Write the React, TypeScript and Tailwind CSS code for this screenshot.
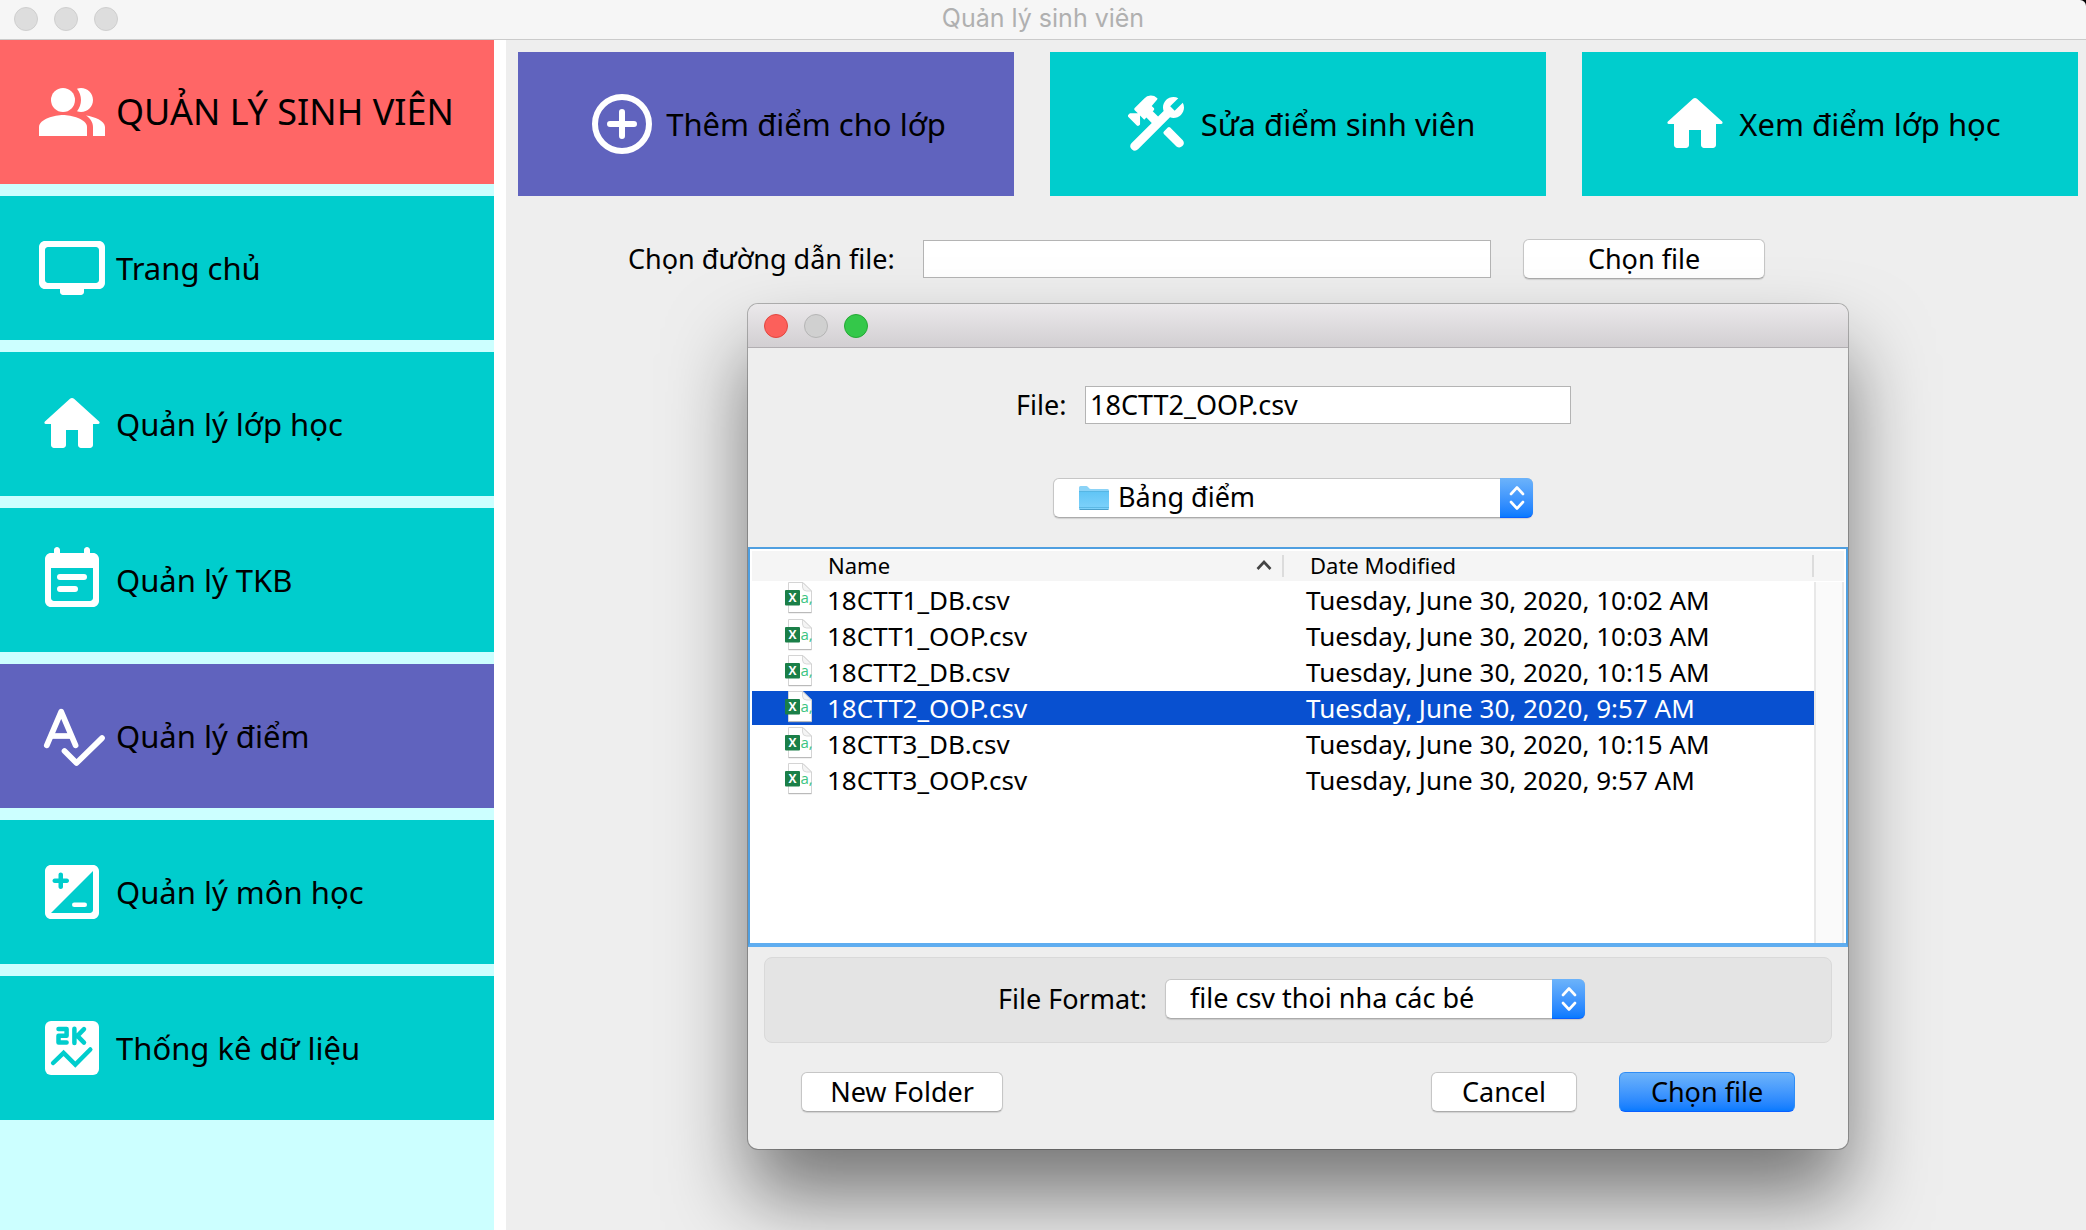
import { useState } from "react";
import type { ReactNode } from "react";

function Glyph({ children }: { children: ReactNode }) {
  return (
    <svg viewBox="0 0 24 24" className="size-18 shrink-0 fill-white" aria-hidden="true">
      {children}
    </svg>
  );
}

function PeopleIcon() {
  return (
    <Glyph>
      <path d="M16.67 13.13C18.04 14.06 19 15.32 19 17v3h4v-3c0-2.18-3.57-3.47-6.33-3.87z" />
      <circle cx="9" cy="8" r="4" />
      <path d="M15 12c2.21 0 4-1.79 4-4s-1.79-4-4-4c-.47 0-.91.1-1.33.24C14.5 5.27 15 6.58 15 8s-.5 2.73-1.33 3.76c.42.14.86.24 1.33.24z" />
      <path d="M9 13c-2.67 0-8 1.34-8 4v3h16v-3c0-2.66-5.33-4-8-4z" />
    </Glyph>
  );
}

function ScreenIcon() {
  return (
    <Glyph>
      <path d="M21 3H3c-1.1 0-2 .9-2 2v12c0 1.1.9 2 2 2h5v1c0 .55.45 1 1 1h6c.55 0 1-.45 1-1v-1h5c1.1 0 1.99-.9 1.99-2L23 5c0-1.1-.9-2-2-2zm-1 14H4c-.55 0-1-.45-1-1V6c0-.55.45-1 1-1h16c.55 0 1 .45 1 1v10c0 .55-.45 1-1 1z" />
    </Glyph>
  );
}

function HomeIcon() {
  return (
    <Glyph>
      <path d="M10 19v-5h4v5c0 .55.45 1 1 1h3c.55 0 1-.45 1-1v-7h1.7c.46 0 .68-.57.33-.87L12.67 3.6c-.38-.34-.96-.34-1.34 0l-8.36 7.53c-.34.3-.13.87.33.87H5v7c0 .55.45 1 1 1h3c.55 0 1-.45 1-1z" />
    </Glyph>
  );
}

function CalendarIcon() {
  return (
    <Glyph>
      <path d="M19 3h-1V2c0-.55-.45-1-1-1s-1 .45-1 1v1H8V2c0-.55-.45-1-1-1s-1 .45-1 1v1H5c-1.1 0-2 .9-2 2v14c0 1.1.9 2 2 2h14c1.1 0 2-.9 2-2V5c0-1.1-.9-2-2-2zm-1 16H6c-.55 0-1-.45-1-1V8h14v10c0 .55-.45 1-1 1z" />
      <rect x="7" y="10" width="10" height="2" rx="1" />
      <rect x="7" y="14" width="7" height="2" rx="1" />
    </Glyph>
  );
}

function GradeIcon() {
  return (
    <Glyph>
      <g fill="none" stroke="white" strokeLinecap="round" strokeLinejoin="round" strokeWidth="1.9">
        <path d="M3.6 15.1 8.4 3.9 13.2 15.1" />
        <path d="M5 12h7" strokeLinecap="butt" />
        <path d="M9.5 17 13.5 21 22 12.7" />
      </g>
    </Glyph>
  );
}

function ExposureIcon() {
  return (
    <Glyph>
      <path
        fillRule="evenodd"
        d="M5 3h14c1.1 0 2 .9 2 2v14c0 1.1-.9 2-2 2H5c-1.1 0-2-.9-2-2V5c0-1.1.9-2 2-2zM19 5 5 19h13c.55 0 1-.45 1-1zM7.5 6.25v1.25H6.25c-1 0-1 1.5 0 1.5H7.5v1.25c0 1 1.5 1 1.5 0V9h1.25c1 0 1-1.5 0-1.5H9V6.25c0-1-1.5-1-1.5 0z"
      />
      <rect x="12" y="15.5" width="5" height="1.5" rx=".75" />
    </Glyph>
  );
}

function StatsIcon() {
  return (
    <Glyph>
      <rect x="3" y="3" width="18" height="18" rx="2" />
      <g fill="none" stroke="#00cdcd" strokeLinecap="round" strokeLinejoin="round" strokeWidth="1.5">
        <path d="M7.5 5.7H10.2V7.9H7.5V10.2H10.2" />
        <path d="M12.8 5.6V10.3M16 5.7 13.8 7.95 16 10.2" />
        <path d="M5.7 17 9.2 13.6 13.1 17.5 18.1 12.5" strokeLinejoin="miter" />
      </g>
    </Glyph>
  );
}

function AddIcon() {
  return (
    <Glyph>
      <g fill="none" stroke="white" strokeLinecap="round" strokeWidth="2">
        <circle cx="12" cy="12" r="9" />
        <path d="M12 8v8M8 12h8" />
      </g>
    </Glyph>
  );
}

function ToolsIcon() {
  return (
    <Glyph>
      <path d="M14.3 15.3q-.4-.4 0-.8l1.3-1.3q.4-.4.8 0L20.6 17.4a1.5 1.5 0 0 1-2.1 2.1z" />
      <path d="M17.5 10c1.93 0 3.5-1.57 3.5-3.5 0-.58-.16-1.12-.41-1.6l-2.7 2.7-1.49-1.49 2.7-2.7c-.48-.25-1.02-.41-1.6-.41C15.57 3 14 4.57 14 6.5c0 .41.08.8.21 1.16l-1.85 1.85-1.78-1.78.35-.35c.2-.2.2-.51 0-.71l-.7-.7L12 3.9q.4-.4 0-.6a3 3 0 0 0-4.24.19L4.57 6.68c-.2.2-.2.51 0 .71l1.06 1.05H3.16c-.13 0-.26.05-.35.15l-.35.35c-.2.2-.2.51 0 .71l2.83 2.83c.2.2.51.2.71 0l.35-.35V9.15l1.41 1.41.71-.71 1.78 1.78-6.7 6.7a1.5 1.5 0 0 0 2.12 2.12L16.34 9.79c.36.13.75.21 1.16.21z" />
    </Glyph>
  );
}

function FolderIcon() {
  return (
    <svg viewBox="0 0 30 24" className="pointer-events-none absolute left-[26px] h-6 w-[30px]" aria-hidden="true">
      <defs>
        <linearGradient id="folder" x1="0" y1="0" x2="0" y2="1">
          <stop offset="0" stopColor="#5fc4f5" />
          <stop offset="1" stopColor="#7fd2fb" />
        </linearGradient>
      </defs>
      <path d="M0 1.5Q0 0 1.5 0H7.5Q8.5 0 9.5 1.5T12 3H28.5Q30 3 30 4.5V8H0z" fill="#8bd3f7" />
      <rect y="5" width="30" height="18.5" rx="1" fill="url(#folder)" />
      <path d="M0 21.5H30M0 5.5H30" stroke="#54b2e0" strokeWidth=".8" />
      <path d="M.5 23.5H29.5" stroke="#4a9fca" strokeWidth="1" />
    </svg>
  );
}

function CsvIcon() {
  return (
    <svg viewBox="0 0 28 32" className="block h-8 w-7" aria-hidden="true">
      <path d="M3.5 .5H18L26.5 9V30.5H3.5z" fill="white" stroke="#d4d4d4" />
      <path d="M17.5 .5V5Q17.5 9 21.5 9H26.5z" fill="#f4f4f4" stroke="#d0d0d0" strokeWidth=".8" />
      <path d="M3.5 30.7H26.5" stroke="#b4b4b4" />
      <rect x="0" y="8" width="15" height="15.5" rx="1" fill="#1a7f48" />
      <text x="7.5" y="20" textAnchor="middle" fontSize="12" fontWeight="700" fill="white" fontFamily="Open Sans, sans-serif">X</text>
      <text x="15.5" y="20.5" fontSize="15" fill="#3bc481" fontFamily="Open Sans, sans-serif">a,</text>
    </svg>
  );
}

function Chevrons() {
  return (
    <span className="pointer-events-none absolute right-0 flex h-10 w-[33px] items-center justify-center rounded-r-md border-b border-[#0a5fff] bg-linear-to-b from-[#6cb3fa] to-[#067aff]">
      <svg viewBox="0 0 16 24" className="h-6 w-4" fill="none" stroke="white" strokeWidth="2.6" strokeLinecap="round" strokeLinejoin="round" aria-hidden="true">
        <path d="M2 8 8 1.5 14 8M2 16 8 22.5 14 16" />
      </svg>
    </span>
  );
}

const plainButton =
  "h-10 rounded-md border border-[#c6c6c6] border-b-[#ababab] bg-white pb-0.5 text-[27px] leading-none shadow-[0_1px_1px_rgba(0,0,0,0.12)]";
const selectStyle =
  "h-10 w-full appearance-none rounded-md border border-[#c6c6c6] border-b-[#ababab] bg-white pb-0.5 text-[27px] leading-9 shadow-[0_1px_1px_rgba(0,0,0,0.12)]";

const menu = [
  { label: "Trang chủ", icon: <ScreenIcon /> },
  { label: "Quản lý lớp học", icon: <HomeIcon /> },
  { label: "Quản lý TKB", icon: <CalendarIcon /> },
  { label: "Quản lý điểm", icon: <GradeIcon />, active: true },
  { label: "Quản lý môn học", icon: <ExposureIcon /> },
  { label: "Thống kê dữ liệu", icon: <StatsIcon /> },
];

const tabs = [
  { label: "Thêm điểm cho lớp", icon: <AddIcon />, active: true },
  { label: "Sửa điểm sinh viên", icon: <ToolsIcon /> },
  { label: "Xem điểm lớp học", icon: <HomeIcon /> },
];

const files = [
  { name: "18CTT1_DB.csv", date: "Tuesday, June 30, 2020, 10:02 AM" },
  { name: "18CTT1_OOP.csv", date: "Tuesday, June 30, 2020, 10:03 AM" },
  { name: "18CTT2_DB.csv", date: "Tuesday, June 30, 2020, 10:15 AM" },
  { name: "18CTT2_OOP.csv", date: "Tuesday, June 30, 2020, 9:57 AM" },
  { name: "18CTT3_DB.csv", date: "Tuesday, June 30, 2020, 10:15 AM" },
  { name: "18CTT3_OOP.csv", date: "Tuesday, June 30, 2020, 9:57 AM" },
];

function FileDialog() {
  const [selected, setSelected] = useState("18CTT2_OOP.csv");
  return (
    <section
      role="dialog"
      aria-label="Chọn file"
      className="absolute top-[264px] left-[242px] flex w-[1100px] flex-col overflow-hidden rounded-[10px] bg-[#eeeeee] text-[27px] shadow-[0_0_0_1px_rgba(0,0,0,0.25),0_48px_80px_rgba(0,0,0,0.5)]"
    >
      <header className="flex h-11 items-center gap-4 border-b border-[#b1aeb1] bg-linear-to-b from-[#ebe9eb] to-[#d2cfd2] px-4">
        <button aria-label="Close" className="size-6 rounded-full border border-[#e2463f] bg-[#fc605b]" />
        <button aria-label="Minimize" className="size-6 rounded-full border border-[#b5b5b5] bg-[#d0d0d0]" />
        <button aria-label="Zoom" className="size-6 rounded-full border border-[#24a934] bg-[#34c84a]" />
      </header>

      <div className="flex h-[76px] items-end pl-[268px]">
        <label htmlFor="file-name" className="w-[69px] leading-[38px]">File:</label>
        <input
          id="file-name"
          value={selected}
          onChange={(e) => setSelected(e.target.value)}
          className="h-[38px] w-[486px] border border-[#b4b4b4] bg-white px-1 outline-none"
        />
      </div>

      <div className="relative mt-[54px] ml-[305px] flex w-[480px] items-center">
        <select aria-label="Folder" className={selectStyle + " pl-16"}>
          <option>Bảng điểm</option>
        </select>
        <FolderIcon />
        <Chevrons />
      </div>

      <div className="mt-[29px] h-[400px] border-2 border-b-4 border-[#4f9fe0] border-b-[#5fadf0] bg-white p-0.5 pb-0">
        <div className="flex h-full flex-col">
          <table className="w-full table-fixed border-collapse text-left">
            <colgroup>
              <col className="w-[532px]" />
              <col className="w-[530px]" />
              <col />
            </colgroup>
            <thead className="bg-[#f5f5f5] text-[22px]">
              <tr className="h-[30px]">
                <th className="p-0 font-normal">
                  <div className="flex h-[22px] items-center justify-between border-r-2 border-[#dcdcdc] pr-2.5 pb-0.5 pl-[76px]">
                    Name
                    <svg viewBox="0 0 16 10" className="h-2.5 w-4" fill="none" stroke="#444" strokeWidth="2.6" aria-hidden="true">
                      <path d="M1.5 9 8 2 14.5 9" />
                    </svg>
                  </div>
                </th>
                <th className="p-0 font-normal">
                  <div className="flex h-[22px] items-center border-r-2 border-[#dcdcdc] pb-0.5 pl-[26px]">Date Modified</div>
                </th>
                <th className="p-0" />
              </tr>
            </thead>
          </table>
          <div className="mt-px flex flex-1">
            <table className="w-[1062px] table-fixed border-collapse self-start text-[26px]">
              <colgroup>
                <col className="w-[75px]" />
                <col className="w-[479px]" />
                <col />
              </colgroup>
              <tbody>
                {files.map((f) => (
                  <tr
                    key={f.name}
                    onClick={() => setSelected(f.name)}
                    className={
                      f.name === selected
                        ? "h-9 border-b-2 border-white bg-[#0850d0] text-white"
                        : "h-9 border-b-2 border-white bg-white"
                    }
                  >
                    <td className="p-0 pl-[33px] align-top"><CsvIcon /></td>
                    <td className="p-0 leading-[34px]">{f.name}</td>
                    <td className="p-0 leading-[34px]">{f.date}</td>
                  </tr>
                ))}
              </tbody>
            </table>
            <div className="w-[30px] border-x-2 border-[#e8e8e8] bg-[#fafafa]" />
          </div>
        </div>
      </div>

      <div className="mx-4 mt-2.5 flex h-[86px] items-center rounded-lg border border-[#d9d9d9] bg-[#e4e4e4] pb-0.5 pl-[233px]">
        <label htmlFor="format" className="w-[167px]">File Format:</label>
        <div className="relative flex w-[420px] items-center">
          <select id="format" className={selectStyle + " pl-6"}>
            <option>file csv thoi nha các bé</option>
          </select>
          <Chevrons />
        </div>
      </div>

      <footer className="flex pt-[29px] pr-[53px] pb-[37px] pl-[53px]">
        <button className={plainButton + " w-[202px]"}>New Folder</button>
        <button className={plainButton + " ml-auto w-[146px]"}>Cancel</button>
        <button className="ml-[42px] h-10 w-[176px] rounded-md border border-[#2f8df5] border-b-[#0a5fff] bg-linear-to-b from-[#6cb3fa] to-[#067aff] pb-0.5 text-[27px] leading-none">
          Chọn file
        </button>
      </footer>
    </section>
  );
}

export default function App() {
  const [path, setPath] = useState("");
  return (
    <div className="flex min-h-screen flex-col overflow-hidden bg-black font-['Noto_Sans',sans-serif] text-black">
      <header className="flex h-10 items-center rounded-tr-md border-b border-[#cbcbcb] bg-[#f6f6f6] px-3.5 pb-0.5">
        <div className="flex flex-1 gap-4">
          <button aria-label="Close window" className="size-6 rounded-full border border-[#cfcfcf] bg-[#dddddd]" />
          <button aria-label="Minimize window" className="size-6 rounded-full border border-[#cfcfcf] bg-[#dddddd]" />
          <button aria-label="Zoom window" className="size-6 rounded-full border border-[#cfcfcf] bg-[#dddddd]" />
        </div>
        <h1 className="font-['Inter',sans-serif] text-[25px] leading-none text-[#b0b0b0]">Quản lý sinh viên</h1>
        <div className="flex-1" />
      </header>

      <div className="flex flex-1 bg-white">
        <nav className="flex w-[494px] shrink-0 flex-col gap-3 bg-[#ccffff]">
          <div className="flex h-36 items-center gap-2 bg-[#ff6666] pl-9 text-[36px] whitespace-nowrap">
            <PeopleIcon />
            QUẢN LÝ SINH VIÊN
          </div>
          {menu.map((m) => (
            <button
              key={m.label}
              className={
                m.active
                  ? "flex h-36 items-center gap-2 bg-[#6063be] pl-9 text-[31px]"
                  : "flex h-36 items-center gap-2 bg-[#00cdcd] pl-9 text-[31px]"
              }
            >
              {m.icon}
              {m.label}
            </button>
          ))}
        </nav>

        <main className="relative ml-3 flex-1 bg-[#eeeeee]">
          <div className="grid grid-cols-3 gap-9 pt-3 pr-2 pl-3">
            {tabs.map((t) => (
              <button
                key={t.label}
                className={
                  t.active
                    ? "flex h-36 items-center justify-center gap-2 bg-[#6063be] text-[31px]"
                    : "flex h-36 items-center justify-center gap-2 bg-[#00cdcd] text-[31px]"
                }
              >
                {t.icon}
                {t.label}
              </button>
            ))}
          </div>
          <div className="mt-[43px] flex h-10 items-center pl-[122px] text-[27px]">
            <label htmlFor="path" className="w-[295px]">Chọn đường dẫn file:</label>
            <input
              id="path"
              value={path}
              onChange={(e) => setPath(e.target.value)}
              className="h-[38px] w-[568px] border border-[#b4b4b4] bg-white px-1"
            />
            <button className={plainButton + " ml-8 w-[242px]"}>Chọn file</button>
          </div>
          <FileDialog />
        </main>
      </div>
    </div>
  );
}
